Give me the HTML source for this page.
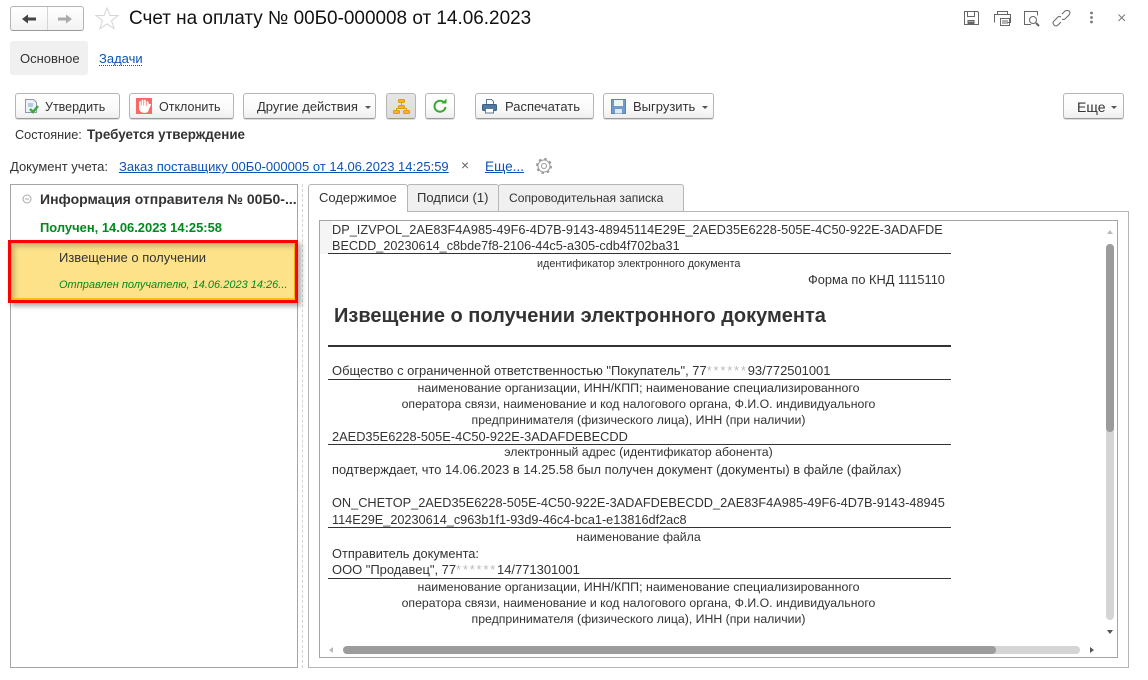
<!DOCTYPE html>
<html><head><meta charset="utf-8">
<style>
html,body{margin:0;padding:0;width:1148px;height:680px;overflow:hidden;background:#fff}
body{position:relative;font-family:"Liberation Sans",sans-serif;color:#333;font-size:13px}
.t{position:absolute;white-space:nowrap;line-height:16px}
.b{position:absolute;box-sizing:border-box;}
.btn{position:absolute;box-sizing:border-box;height:26px;top:93px;border:1px solid #b5b5b5;border-bottom-color:#9a9a9a;border-radius:3px;background:linear-gradient(#fff,#fafafa 60%,#eee);box-shadow:0 1px 0 #ddd}
.l{position:absolute;height:1px;background:#333}
.c{position:absolute;white-space:nowrap;line-height:14px;text-align:center;font-size:12.300px;color:#333}
.d{position:absolute;white-space:nowrap;line-height:16px;font-size:12.800px;color:#333}
.s{color:#bbb;letter-spacing:1.800px}
a{color:#0d52b5;text-decoration:underline}
.arr{position:absolute;width:0;height:0;border-left:3px solid transparent;border-right:3px solid transparent;border-top:3px solid #555}
svg{position:absolute;overflow:visible}
</style></head><body>

<!-- nav -->
<div class="b" style="left:10px;top:6px;width:74px;height:25px;border:1px solid #b5b5b5;border-bottom-color:#999;border-radius:3px;background:linear-gradient(#fff,#f3f3f3)"></div>
<div class="b" style="left:47px;top:7px;width:1px;height:23px;background:#d5d5d5"></div>
<svg style="left:0;top:0" width="100" height="40"><path d="M27 19H36" stroke="#444" stroke-width="3"/><path d="M22 19l6-4.500v9z" fill="#444"/><path d="M58 19H67" stroke="#aaa" stroke-width="3"/><path d="M72 19l-6-4.500v9z" fill="#aaa"/></svg>
<svg style="left:95px;top:7px" width="24" height="23"><path d="M12 1l3 7.500h8l-6.500 5.200 2.600 8L12 17l-7.100 4.700 2.600-8L1 8.500h8z" fill="#fff" stroke="#d5d5d5" stroke-width="1"/></svg>
<div class="t" style="left:129px;top:8px;font-size:18.950px;line-height:22px;color:#111">Счет на оплату № 00Б0-000008 от 14.06.2023</div>

<!-- top right icons -->
<svg style="left:960px;top:8px" width="170" height="20" fill="none" stroke="#666" stroke-width="1">
<path d="M4.500 3.500h13l1 1v12h-14zM7.500 3.500v5h7v-5M8 12.500h6v4H8z"/><path d="M9 14h4v2.500H9z" fill="#666"/>
<path d="M37.500 6.500v-3h10v3M34.500 14.500v-8h16v8h-3M40.500 10.500h9v7h-9zM42 13h6M42 15h6"/>
<path d="M71 16.500h-6.500v-13h13v4"/><circle cx="73" cy="12" r="3.500"/><path d="M76 15l3 3" stroke-width="2"/>
<path d="M102 6l3-3q2-1 4 0t0 4l-4 4q-2 1-3 0M101 9q-2-1-3 0l-4 4q-2 2 0 4t4 0l3-3" />
<circle cx="131.500" cy="5" r="1.400" fill="#777" stroke="none"/><circle cx="131.500" cy="9.500" r="1.400" fill="#777" stroke="none"/><circle cx="131.500" cy="14" r="1.400" fill="#777" stroke="none"/>
<path d="M158.500 6.500l6.500 6.500M165 6.500l-6.500 6.500" stroke="#777"/>
</svg>

<!-- section tabs -->
<div class="b" style="left:10px;top:41px;width:78px;height:34px;background:#f0f0f0;border-radius:3px"></div>
<div class="t" style="left:20px;top:51px">Основное</div>
<div class="t" style="left:99px;top:51px;color:#0d52b5">Задачи</div>
<div class="b" style="left:99px;top:65px;width:43px;height:0;border-top:1px dotted #0d52b5"></div>

<!-- toolbar -->
<div class="btn" style="left:15px;width:105px"></div>
<svg style="left:24px;top:98px" width="16" height="17"><path d="M1.500 1.500h8l3 3v10h-11z" fill="#eef3f8" stroke="#8a9bb0"/><path d="M4 6h5M4 8h5" stroke="#7fa0c0"/><path d="M6 11l3 3 5-6" fill="none" stroke="#3cab3c" stroke-width="2.500"/></svg>
<div class="t" style="left:45px;top:99px;font-size:12.500px">Утвердить</div>

<div class="btn" style="left:129px;width:105px"></div>
<div class="b" style="left:136px;top:98px;width:16px;height:16px;background:#f66"></div>
<svg style="left:136px;top:98px" width="16" height="16"><path d="M4 8V4M6.500 8V2.500M9 8V2.500M11.500 8V4M4 7v4q1 3 4 3h1q3 0 3-3l2-4-1.500-.5L11.500 8" stroke="#fff" stroke-width="1.800" fill="#fff" stroke-linecap="round"/></svg>
<div class="t" style="left:159px;top:99px;font-size:12.500px">Отклонить</div>

<div class="btn" style="left:243px;width:133px"></div>
<div class="t" style="left:257px;top:99px">Другие действия</div>
<div class="arr" style="left:365px;top:106px"></div>

<div class="btn" style="left:386px;width:30px;background:linear-gradient(#e6e6e6,#dcdcdc)"></div>
<svg style="left:393px;top:98px" width="17" height="17" fill="#f9b233" stroke="#e09a10" stroke-width="1"><path d="M8.500 5v3M3.500 13v-2.500h10V13" fill="none" stroke="#d99a20"/><rect x="5.500" y="1.500" width="6" height="3" rx="1"/><rect x="5.500" y="7.500" width="6" height="3" rx="1"/><rect x=".5" y="12.500" width="6" height="3" rx="1"/><rect x="10.500" y="12.500" width="6" height="3" rx="1"/></svg>

<div class="btn" style="left:425px;width:30px"></div>
<svg style="left:432px;top:98px" width="16" height="16" fill="none"><path d="M12.500 5A5.500 5.500 0 1 0 13.500 9" stroke="#3aa835" stroke-width="2"/><path d="M9.500 5.500h5v-5z" fill="#3aa835"/></svg>

<div class="btn" style="left:475px;width:119px"></div>
<svg style="left:482px;top:99px" width="16" height="15"><path d="M4.500 6V.5h5l2 2V6" fill="#fff" stroke="#5c7a96"/><rect x=".5" y="5.500" width="14" height="6" rx="1" fill="#4f7aa3" stroke="#3d5f80"/><rect x="3.500" y="9.500" width="8" height="4.500" fill="#fff" stroke="#5c7a96"/></svg>
<div class="t" style="left:505px;top:99px">Распечатать</div>

<div class="btn" style="left:603px;width:111px"></div>
<svg style="left:611px;top:99px" width="15" height="15"><rect x=".5" y=".5" width="14" height="14" fill="#6f9ccb" stroke="#5b86b3"/><rect x="3" y="1" width="9" height="6" fill="#eef3f8"/><rect x="4" y="10" width="7" height="4.500" fill="#dfe7ef"/></svg>
<div class="t" style="left:633px;top:99px">Выгрузить</div>
<div class="arr" style="left:702px;top:106px"></div>

<div class="btn" style="left:1063px;width:61px"></div>
<div class="t" style="left:1077px;top:99px;font-size:14px">Еще</div>
<div class="arr" style="left:1111px;top:106px"></div>

<!-- state -->
<div class="t" style="left:15px;top:127px;font-size:12.700px">Состояние:</div>
<div class="t" style="left:87px;top:127px;font-weight:bold;font-size:13.400px">Требуется утверждение</div>

<!-- doc -->
<div class="t" style="left:10px;top:159px">Документ учета:</div>
<a class="t" style="left:119px;top:159px">Заказ поставщику 00Б0-000005 от 14.06.2023 14:25:59</a>
<div class="t" style="left:461px;top:157px;color:#666;font-size:14px">×</div>
<a class="t" style="left:485px;top:159px;font-size:13.600px">Еще...</a>
<svg style="left:535px;top:157px" width="18" height="18" fill="none" stroke="#999"><circle cx="9" cy="9" r="2.500"/><circle cx="9" cy="9" r="6"/><circle cx="9" cy="9" r="7" stroke-dasharray="2.500 3" stroke-width="2"/></svg>

<!-- left panel -->
<div class="b" style="left:10px;top:184px;width:288px;height:484px;border:1px solid #a5a5a5"></div>
<div class="b" style="left:302px;top:184px;width:0;height:484px;border-left:1px dashed #d5d5d5"></div>
<svg style="left:22px;top:194px" width="10" height="10" fill="none" stroke="#aaa"><circle cx="5" cy="5" r="4"/><path d="M3 5h4"/></svg>
<div class="t" style="left:40px;top:191px;font-weight:bold;font-size:14px">Информация отправителя № 00Б0-...</div>
<div class="t" style="left:40px;top:220px;font-weight:bold;font-size:12.950px;color:#008a1e">Получен, 14.06.2023 14:25:58</div>

<div class="b" style="left:8px;top:240px;width:290px;height:63px;border:3px solid #f00;background:#fde28a;box-shadow:3px 3px 5px rgba(0,0,0,.35)"></div>
<div class="b" style="left:11px;top:243px;width:284px;height:57px;border:1px solid #f0b400;border-bottom:2px solid #f5c20e;box-shadow:inset 3px 3px 4px rgba(120,110,60,.35)"></div>
<div class="t" style="left:59px;top:250px">Извещение о получении</div>
<div class="t" style="left:59px;top:277px;font-style:italic;font-size:11px;color:#008a1e">Отправлен получателю, 14.06.2023 14:26...</div>

<!-- right tabs -->
<div class="b" style="left:308px;top:211px;width:821px;height:457px;border:1px solid #b5b5b5"></div>
<div class="b" style="left:308px;top:184px;width:100px;height:28px;border:1px solid #b5b5b5;border-bottom:none;background:#fff;border-radius:3px 3px 0 0"></div>
<div class="b" style="left:407px;top:184px;width:92px;height:27px;border:1px solid #b5b5b5;border-bottom:none;background:#f0f0f0;border-radius:3px 3px 0 0"></div>
<div class="b" style="left:498px;top:184px;width:186px;height:27px;border:1px solid #b5b5b5;border-bottom:none;background:#f0f0f0;border-radius:3px 3px 0 0"></div>
<div class="t" style="left:319px;top:190px">Содержимое</div>
<div class="t" style="left:417px;top:190px">Подписи (1)</div>
<div class="t" style="left:509px;top:190px;font-size:12.100px">Сопроводительная записка</div>

<!-- inner document -->
<div class="b" style="left:319px;top:220px;width:799px;height:438px;border:1px solid #a5a5a5"></div>
<div class="b" style="left:320px;top:221px;width:12px;height:33px;background:#f5f5f5"></div>

<div class="d" style="left:332px;top:222px;font-size:12.750px">DP_IZVPOL_2AE83F4A985-49F6-4D7B-9143-48945114E29E_2AED35E6228-505E-4C50-922E-3ADAFDE</div>
<div class="d" style="left:332px;top:238px;font-size:12.660px">BECDD_20230614_c8bde7f8-2106-44c5-a305-cdb4f702ba31</div>
<div class="l" style="left:328px;top:253px;width:623px"></div>
<div class="t" style="left:537px;top:257px;font-size:10.800px;line-height:14px">идентификатор электронного документа</div>
<div class="d" style="left:808px;top:272px">Форма по КНД 1115110</div>
<div class="t" style="left:334px;top:304px;font-size:20px;line-height:24px;font-weight:bold">Извещение о получении электронного документа</div>
<div class="l" style="left:328px;top:345px;width:623px;height:2px"></div>

<div class="d" style="left:332px;top:363px;font-size:12.950px">Общество с ограниченной ответственностью "Покупатель", 77<span class="s">******</span>93/772501001</div>
<div class="l" style="left:328px;top:379px;width:623px"></div>
<div class="c" style="left:308px;width:661px;top:381px;font-size:12.400px">наименование организации, ИНН/КПП; наименование специализированного</div>
<div class="c" style="left:308px;width:661px;top:397px">оператора связи, наименование и код налогового органа, Ф.И.О. индивидуального</div>
<div class="c" style="left:308px;width:661px;top:413px">предпринимателя (физического лица), ИНН (при наличии)</div>
<div class="d" style="left:332px;top:429px">2AED35E6228-505E-4C50-922E-3ADAFDEBECDD</div>
<div class="l" style="left:328px;top:444px;width:623px"></div>
<div class="c" style="left:308px;width:661px;top:445px">электронный адрес (идентификатор абонента)</div>
<div class="d" style="left:332px;top:462px;font-size:12.860px">подтверждает, что 14.06.2023 в 14.25.58 был получен документ (документы) в файле (файлах)</div>

<div class="d" style="left:332px;top:495px;font-size:12.750px">ON_CHETOP_2AED35E6228-505E-4C50-922E-3ADAFDEBECDD_2AE83F4A985-49F6-4D7B-9143-48945</div>
<div class="d" style="left:332px;top:512px;font-size:12.700px">114E29E_20230614_c963b1f1-93d9-46c4-bca1-e13816df2ac8</div>
<div class="l" style="left:328px;top:527px;width:623px"></div>
<div class="c" style="left:308px;width:661px;top:530px">наименование файла</div>
<div class="d" style="left:332px;top:546px">Отправитель документа:</div>
<div class="d" style="left:332px;top:562px;font-size:12.950px">ООО "Продавец", 77<span class="s">******</span>14/771301001</div>
<div class="l" style="left:328px;top:578px;width:623px"></div>
<div class="c" style="left:308px;width:661px;top:580px;font-size:12.400px">наименование организации, ИНН/КПП; наименование специализированного</div>
<div class="c" style="left:308px;width:661px;top:596px">оператора связи, наименование и код налогового органа, Ф.И.О. индивидуального</div>
<div class="c" style="left:308px;width:661px;top:612px">предпринимателя (физического лица), ИНН (при наличии)</div>

<!-- scrollbars -->
<div class="b" style="left:1106px;top:244px;width:8px;height:376px;background:#d5d5d5;border-radius:4px"></div>
<div class="b" style="left:1106px;top:244px;width:8px;height:188px;background:#9c9c9c;border-radius:4px"></div>
<div class="b" style="left:343px;top:646px;width:737px;height:8px;background:#d5d5d5;border-radius:4px"></div>
<div class="b" style="left:343px;top:646px;width:653px;height:8px;background:#9c9c9c;border-radius:4px"></div>
<div class="b" style="left:1107px;top:230px;width:0;height:0;border-left:3px solid transparent;border-right:3px solid transparent;border-bottom:4px solid #bbb"></div>
<div class="b" style="left:1107px;top:630px;width:0;height:0;border-left:3px solid transparent;border-right:3px solid transparent;border-top:4px solid #555"></div>
<div class="b" style="left:329px;top:647px;width:0;height:0;border-top:3px solid transparent;border-bottom:3px solid transparent;border-right:4px solid #bbb"></div>
<div class="b" style="left:1090px;top:647px;width:0;height:0;border-top:3px solid transparent;border-bottom:3px solid transparent;border-left:4px solid #555"></div>
</body></html>
